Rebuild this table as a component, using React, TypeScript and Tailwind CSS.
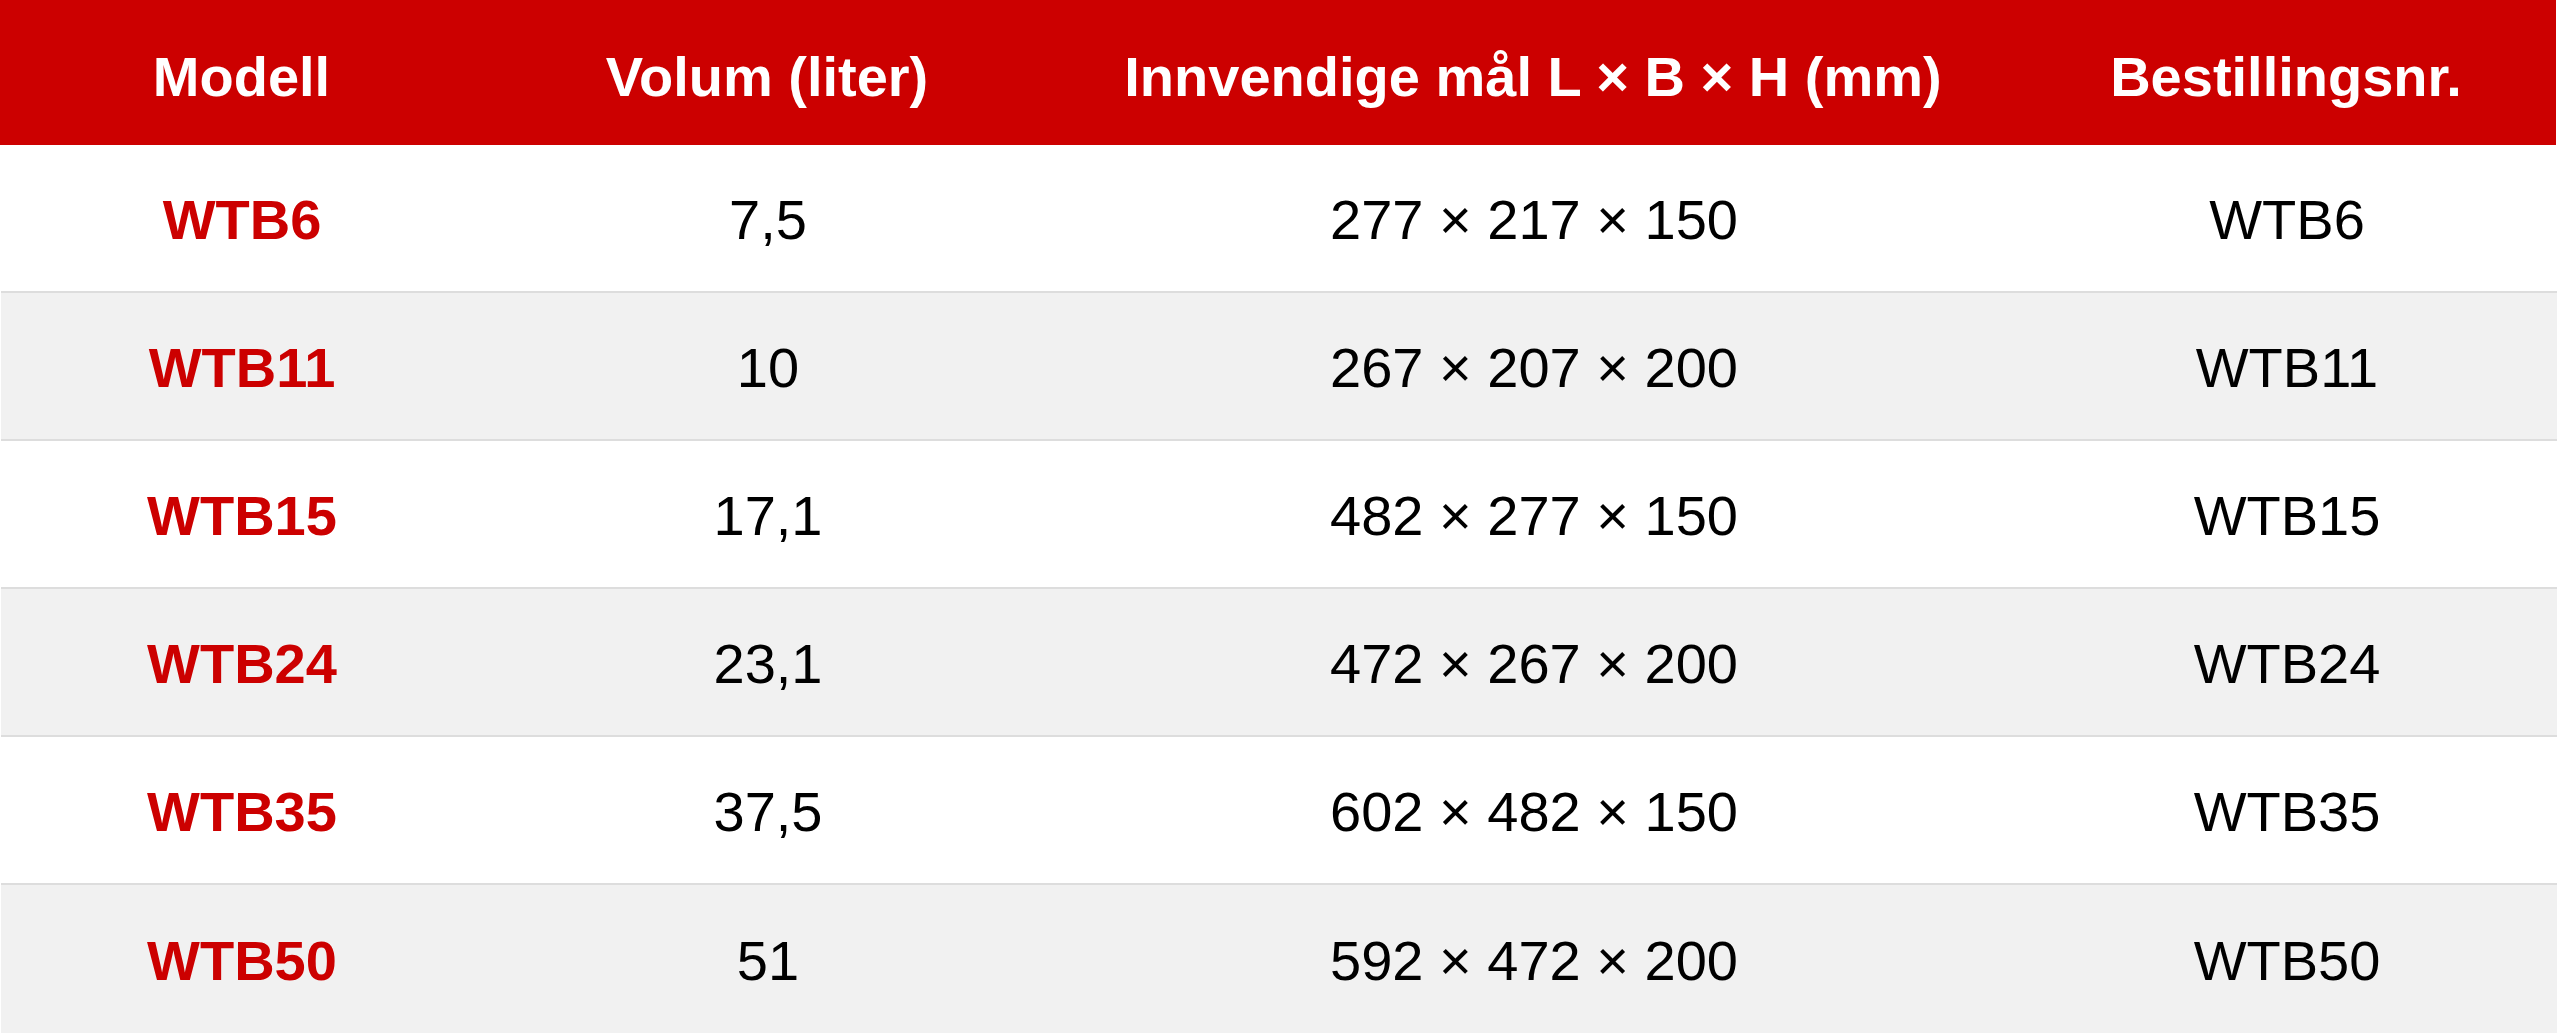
const rows = [
  { model: 'WTB6', volume: '7,5', size: '277 × 217 × 150', order: 'WTB6' },
  { model: 'WTB11', volume: '10', size: '267 × 207 × 200', order: 'WTB11' },
  { model: 'WTB15', volume: '17,1', size: '482 × 277 × 150', order: 'WTB15' },
  { model: 'WTB24', volume: '23,1', size: '472 × 267 × 200', order: 'WTB24' },
  { model: 'WTB35', volume: '37,5', size: '602 × 482 × 150', order: 'WTB35' },
  { model: 'WTB50', volume: '51', size: '592 × 472 × 200', order: 'WTB50' },
];

const cols = 'grid grid-cols-[482px_570px_962px_544px]';

export default function App() {
  return (
    <div className="w-[2560px] h-[1035px] bg-white font-['Liberation_Sans',Arial,sans-serif] text-[56px] leading-none">
      <div className={`${cols} h-[145px] pt-[8px] bg-[#cc0000] text-white font-bold w-[2556px]`}>
        <div className="flex items-center justify-center pl-px">Modell</div>
        <div className="flex items-center justify-center">Volum (liter)</div>
        <div className="flex items-center justify-center">Innvendige mål L × B × H (mm)</div>
        <div className="flex items-center justify-center">Bestillingsnr.</div>
      </div>

      <div className="ml-px w-[2556px]">
        {rows.map((r, i) => (
          <div
            key={r.model}
            className={`${cols} h-[148px] pt-1 ${i < rows.length - 1 ? 'border-b-2 border-[#dddddd]' : ''} ${i % 2 === 1 ? 'bg-[#f1f1f1]' : 'bg-white'} text-black`}
          >
            <div className="flex items-center justify-center font-bold text-[#cc0000]">{r.model}</div>
            <div className="flex items-center justify-center">{r.volume}</div>
            <div className="flex items-center justify-center">{r.size}</div>
            <div className="flex items-center justify-center">{r.order}</div>
          </div>
        ))}
      </div>
    </div>
  );
}
